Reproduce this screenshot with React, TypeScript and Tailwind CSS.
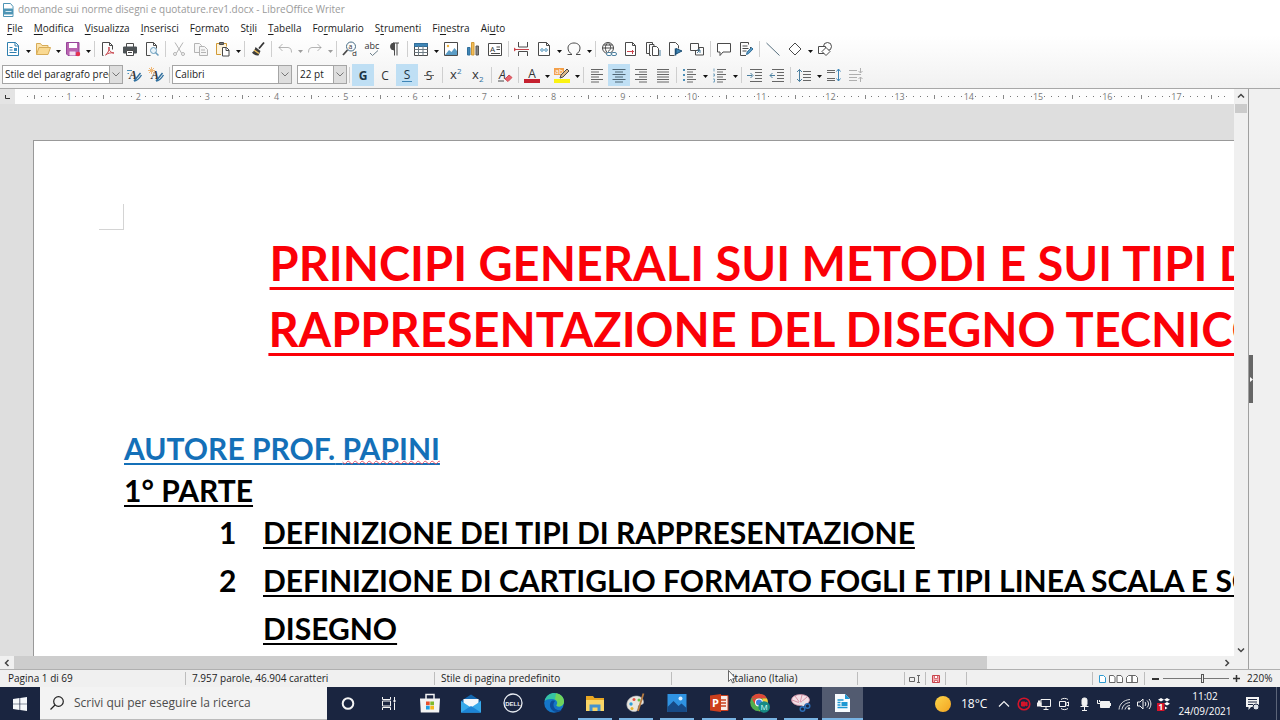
import type { ReactNode } from 'react';
import clsx from 'clsx';

const MENUS = [
  ['', 'F', 'ile'],
  ['', 'M', 'odifica'],
  ['', 'V', 'isualizza'],
  ['', 'I', 'nserisci'],
  ['F', 'o', 'rmato'],
  ['St', 'i', 'li'],
  ['', 'T', 'abella'],
  ['Fo', 'r', 'mulario'],
  ['S', 't', 'rumenti'],
  ['Fi', 'n', 'estra'],
  ['Ai', 'u', 'to'],
];

const RULER_SLOTS = Array.from({ length: 174 }, (_, i) => i + 4);

function Icon({ children, dim }: { children: ReactNode; dim?: boolean }) {
  return (
    <svg
      viewBox="0 0 16 16"
      className={clsx('h-4 w-4 shrink-0 overflow-visible', dim && 'opacity-40')}
      fill="none"
      stroke="#4a4a4a"
      strokeWidth="1"
      aria-hidden="true"
    >
      {children}
    </svg>
  );
}

interface ToolProps {
  label: string;
  children: ReactNode;
  menu?: boolean;
  active?: boolean;
  dim?: boolean;
}

function Tool({ label, children, menu, active, dim }: ToolProps) {
  return (
    <>
      <button
        type="button"
        aria-label={label}
        aria-pressed={active}
        className={clsx('flex h-[22px] w-[22px] shrink-0 items-center justify-center', active && 'bg-[#bfdff4]')}
      >
        <Icon dim={dim}>{children}</Icon>
      </button>
      {menu && (
        <button type="button" aria-label={`${label}: altre opzioni`} className="flex w-2 shrink-0 items-center justify-center">
          <svg viewBox="0 0 5 3" className={clsx('mt-1 h-[3px] w-[5px]', dim && 'opacity-40')} aria-hidden="true">
            <path d="M0 0h5L2.500 3z" fill="#111" />
          </svg>
        </button>
      )}
    </>
  );
}

function Sep() {
  return (
    <div className="flex w-[5px] shrink-0 justify-center">
      <div className="h-4 w-px bg-[#cfcfcf]" />
    </div>
  );
}

function Combo({ label, value, className }: { label: string; value: string; className: string }) {
  return (
    <div className={clsx('relative h-[19px] shrink-0', className)}>
      <select
        aria-label={label}
        className="block h-[19px] w-full appearance-none border border-[#a5a5a5] bg-white pr-3 pl-0.5 text-[10px] leading-[17px] text-[#222]"
      >
        <option>{value}</option>
      </select>
      <span className="pointer-events-none absolute inset-y-0 right-0 flex w-[14px] items-center justify-center border border-[#a5a5a5] bg-[#dedede]">
        <svg viewBox="0 0 8 5" className="h-[5px] w-2" fill="none" stroke="#777" aria-hidden="true">
          <path d="M.5.5 4 4 7.500.5" />
        </svg>
      </span>
    </div>
  );
}

function StandardBar() {
  return (
    <div className="flex h-6 items-center pl-0.5" role="toolbar" aria-label="Standard">
      <Tool label="Nuovo" menu>
        <path d="M2.500 1.500h8l3 3v10h-11z" fill="#fff" stroke="#2f7fae" />
        <path d="M10 1.500v3.500h3.500M4.500 6.500h3M4.500 9h3M4.500 11.500h7" stroke="#2f7fae" />
        <path d="M9 7h3v3H9z" fill="#3f8fc0" stroke="none" />
      </Tool>
      <Tool label="Apri" menu>
        <path d="M1.500 13.500v-11h4l1.500 2h6v2" fill="#fbe3ac" stroke="#d8ac57" />
        <path d="M1.500 13.500 4 6.500h11.500l-2.500 7z" fill="#f9d992" stroke="#d8ac57" />
      </Tool>
      <Tool label="Salva" menu>
        <path d="M1.500 1.500h12.500v13H3l-1.500-1.500z" fill="#b864b0" stroke="#97459a" />
        <path d="M4 2h8v5H4z" fill="#fff" stroke="none" />
        <path d="M4.500 10.500h6v4h-6z" fill="#f4dff2" stroke="none" />
        <circle cx="13" cy="13" r="2.200" fill="#e6304e" stroke="none" />
      </Tool>
      <Sep />
      <Tool label="Esporta in PDF">
        <path d="M3.500 14.500h-1v-13h7l3 3v4M9.500 1.500v3h3" />
        <path d="M5.500 14c3-2 4-6 3.500-8-.8 3 2 6 5 6-3-.5-6 0-8.500 2z" stroke="#c8434b" />
      </Tool>
      <Tool label="Stampa">
        <path d="M4.500 6V2.500h7V6" fill="#fff" />
        <path d="M1.500 6h13v6h-13z" fill="#4d5356" stroke="#4d5356" />
        <path d="M4.500 9.500h7v5h-7z" fill="#fff" />
        <path d="M6 11.500h4" />
      </Tool>
      <Tool label="Anteprima di stampa">
        <path d="M6.500 14.500h-4v-13h7l3 3v3M9.500 1.500v3h3" />
        <circle cx="9.500" cy="9.500" r="3" stroke="#6a9dbd" fill="#e8f3fa" />
        <path d="m11.500 11.500 3 3" stroke="#6a9dbd" strokeWidth="1.500" />
      </Tool>
      <Sep />
      <Tool label="Taglia" dim>
        <path d="M4 1.500 10.500 12M12 1.500 5.500 12" />
        <circle cx="4" cy="13" r="1.500" />
        <circle cx="12" cy="13" r="1.500" />
      </Tool>
      <Tool label="Copia" dim>
        <path d="M1.500 2.500h5l2 2v7h-7z" fill="#eee" />
        <path d="M6.500 5.500h5l3 3v6h-8zM8 9h4M8 11.500h5" fill="#eee" />
      </Tool>
      <Tool label="Incolla" menu>
        <path d="M6 13.500H1.500v-11h10v3" stroke="#d19a35" fill="#fdf3dc" />
        <path d="M4.500 1.500h4v2h-4z" fill="#777" />
        <path d="M7.500 6.500h4l2.500 2.500v6h-6.500zM11 6.500v3h3" fill="#fff" />
      </Tool>
      <Sep />
      <Tool label="Clona formattazione">
        <path d="m14 1.500-5 6" stroke="#333" strokeWidth="1.800" />
        <path d="m5.500 6 5 4-2 4.500c-3 0-5-1-6.500-3 2-1 3-3 3.500-5.500z" fill="#3d3d3d" stroke="none" />
        <path d="m4 9 5 3.500" stroke="#efc15c" strokeWidth="1.500" />
      </Tool>
      <Sep />
      <Tool label="Annulla" menu dim>
        <path d="M5.500 3 2 6.500 5.500 10M2 6.500h9c3 0 3.500 3 3.500 5" />
      </Tool>
      <Tool label="Ripristina" menu dim>
        <path d="M10.500 3 14 6.500 10.500 10M14 6.500H5c-3 0-3.500 3-3.500 5" />
      </Tool>
      <Sep />
      <Tool label="Trova e sostituisci">
        <circle cx="9" cy="5.500" r="4.500" stroke="#476d86" />
        <path d="M5.500 9 1 14" strokeWidth="1.800" />
        <text x="6.500" y="8" fontSize="7" fill="#333" stroke="none" className="font-['Open_Sans',sans-serif]">a</text>
        <text x="10" y="15" fontSize="8" fill="#333" stroke="none" className="font-['Open_Sans',sans-serif]">d</text>
      </Tool>
      <Tool label="Controllo ortografico">
        <text x="8" y="8" textAnchor="middle" fontSize="9" fill="#333" stroke="none" className="font-['Open_Sans',sans-serif]">abc</text>
        <path d="m6 12 2.500 2.500L14 9.500" stroke="#6b7f8a" />
      </Tool>
      <Tool label="Segni di formattazione">
        <path d="M8 2a3.500 3.500 0 0 0 0 7z" fill="#4a4a4a" />
        <path d="M7 2h6M8.500 2v12.500M11 2v12.500" />
      </Tool>
      <Sep />
      <Tool label="Inserisci tabella" menu>
        <path d="M1.500 2.500h13v12h-13z" fill="#fff" />
        <path d="M1.500 2.500h13v3h-13z" fill="#3f86b7" stroke="#316f9b" />
        <path d="M1.500 8.500h13M1.500 11.500h13M5.500 5v9.500M10 5v9.500" stroke="#6f7c84" />
      </Tool>
      <Tool label="Inserisci immagine">
        <path d="M1.500 1.500h13v13h-13z" fill="#fff" />
        <path d="m2 14 4-5 2.500 2 3-4L14 10v4z" fill="#5b9cc5" stroke="none" />
        <circle cx="5" cy="5" r="1.200" fill="#efb23e" stroke="none" />
      </Tool>
      <Tool label="Inserisci grafico">
        <path d="M2.500 6.500h2.500v7.500H2.500z" fill="#3f86b7" stroke="#316f9b" />
        <path d="M6.500 1.500H9v12.500H6.500z" fill="#f3bd59" stroke="#d19a35" />
        <path d="M11 5h2.500v9H11z" fill="#888" stroke="#555" />
      </Tool>
      <Tool label="Inserisci casella di testo">
        <path d="M1.500 2.500h13v12h-13z" fill="#fff" />
        <text x="3" y="11" fontSize="8" fill="#333" stroke="none" className="font-['Open_Sans',sans-serif]">A</text>
        <path d="M9.500 6h3.500M9.500 8.500h3.500M4 12.500h9" />
      </Tool>
      <Sep />
      <Tool label="Interruzione di pagina">
        <path d="M4.500 1v5h9V1M4.500 15v-4.500h9V15" />
        <path d="M1 8.500h14" stroke="#c8434b" />
        <path d="M0 6.500v4l2.500-2z" fill="#c8434b" stroke="none" />
      </Tool>
      <Tool label="Inserisci campo" menu>
        <path d="M2.500 1.500h8l3 3v10h-11zM10.500 1.500v3h3" fill="#fff" />
        <path d="m6.500 7-2 2 2 2M9.500 7l2 2-2 2M6 9h4" stroke="#2f7fae" />
      </Tool>
      <Tool label="Carattere speciale" menu>
        <path d="M1.500 13.500H6c-2.500-2-4-3.500-4-6.500C2 4 4.500 2 8 2s6 2 6 5c0 3-1.500 4.500-4 6.500h4.500" />
      </Tool>
      <Sep />
      <Tool label="Collegamento ipertestuale">
        <circle cx="7" cy="7" r="5.500" />
        <path d="M1.500 7h11M7 1.500c-3.500 3-3.500 8 0 11M7 1.500c3.500 3 3.500 7 0 9M2.500 4h9" />
        <rect x="5.500" y="11.500" width="5" height="3" rx="1.500" fill="#fff" stroke="#4b7f9f" />
        <rect x="10.500" y="11.500" width="5" height="3" rx="1.500" fill="#fff" stroke="#4b7f9f" />
      </Tool>
      <Tool label="Nota a piè di pagina">
        <path d="M2.500 1.500h7l3 3v10h-10zM9.500 1.500v3h3" fill="#fff" />
        <path d="M4 10.500h7M9.500 9v4" stroke="#c8434b" />
      </Tool>
      <Tool label="Nota di chiusura">
        <path d="M4 12.500H1.500v-11h6V3M6 14.500H4.500v-11H9V5" />
        <path d="M7.500 5.500h4l2 2v7h-6z" fill="#fff" />
        <path d="M15 9v6" stroke="#4b7f9f" />
      </Tool>
      <Tool label="Segnalibro">
        <path d="M7.500 14.500h-5v-13h6l3 3v3" />
        <path d="M8.500 14.500v-7" stroke="#1d4f74" strokeWidth="1.500" />
        <path d="M9 7.500 15 10l-6 3z" fill="#3f86b7" stroke="#1d4f74" />
      </Tool>
      <Tool label="Riferimento incrociato">
        <path d="M1.500 2.500h8v7h-8zM5 9.500h5v-3h4.500v7.500H6.500v-5" />
        <path d="m8 12 3-3m0 3V9H8" stroke="#4b7f9f" />
      </Tool>
      <Sep />
      <Tool label="Commento">
        <path d="M1.500 2.500h13v8.500H7l-3 3.500V11H1.500z" fill="#fff" />
      </Tool>
      <Tool label="Revisioni">
        <path d="M8 14.500H2.500v-13h8v2M12.500 6v3" />
        <path d="M4.500 5h5M4.500 7.500h6M4.500 10h4" />
        <path d="m8.500 13.500.7-2.500 4.300-4.500 1.500 1.500-4.300 4.500z" fill="#5b9cc5" stroke="#316f9b" />
      </Tool>
      <Sep />
      <Tool label="Linea">
        <path d="m1.500 2 13 12.500" stroke="#57707f" />
      </Tool>
      <Tool label="Forme" menu>
        <path d="M8 2 14 8 8 14 2 8z" fill="#fff" />
      </Tool>
      <Tool label="Funzioni di disegno">
        <circle cx="10.500" cy="5.500" r="4" />
        <path d="M1.500 5.500h7v7h-7z" fill="#fff" />
        <path d="m9 6.500 4 4-4 4-4-4z" fill="#fff" />
      </Tool>
    </div>
  );
}

function FormatBar() {
  return (
    <div className="flex h-[27px] items-center pl-0.5" role="toolbar" aria-label="Formattazione">
      <Combo label="Stile del paragrafo" value="Stile del paragrafo predefinito" className="w-[121px]" />
      <Tool label="Aggiorna stile">
        <text x="3" y="12" fontSize="12" fontWeight="700" fill="#333" stroke="none" className="font-['Liberation_Serif',serif] italic">A</text>
        <path d="M1 3.500h5M3 6.500H1.500" stroke="#4b8fb8" />
        <path d="m8 14 6.500-8M8 14c3 0 5-2 7.500-6" stroke="#2f6f9e" strokeWidth="1.400" />
      </Tool>
      <Tool label="Nuovo stile">
        <text x="3" y="12" fontSize="12" fontWeight="700" fill="#333" stroke="none" className="font-['Liberation_Serif',serif] italic">A</text>
        <path d="M3.500 0v7M0 3.500h7M1 1l5 5M6 1 1 6" stroke="#efb878" />
        <path d="m8 14 6.500-8M8 14c3 0 5-2 7.500-6" stroke="#2f6f9e" strokeWidth="1.400" />
      </Tool>
      <Sep />
      <Combo label="Tipo di carattere" value="Calibri" className="w-[120px]" />
      <div className="w-[5px] shrink-0" />
      <Combo label="Dimensione carattere" value="22 pt" className="w-[50px]" />
      <Sep />
      <Tool label="Grassetto" active>
        <text x="8" y="12.500" textAnchor="middle" fontSize="12" fontWeight="700" fill="#1c3445" stroke="none" className="font-['Open_Sans',sans-serif]">G</text>
      </Tool>
      <Tool label="Corsivo">
        <text x="8" y="12.500" textAnchor="middle" fontSize="12" fill="#333" stroke="none" className="font-['Open_Sans',sans-serif]">C</text>
      </Tool>
      <Tool label="Sottolineato" active>
        <text x="8" y="11.500" textAnchor="middle" fontSize="12" fill="#1c3445" stroke="none" className="font-['Open_Sans',sans-serif]">S</text>
        <path d="M3 14.500h10" stroke="#3f86b7" />
      </Tool>
      <Tool label="Barrato">
        <text x="8" y="12.500" textAnchor="middle" fontSize="12" fill="#333" stroke="none" className="font-['Open_Sans',sans-serif]">S</text>
        <path d="M3 8.500h10" stroke="#666" />
      </Tool>
      <Sep />
      <Tool label="Apice">
        <text x="2" y="12" fontSize="13" fill="#333" stroke="none" className="font-['Open_Sans',sans-serif]">x</text>
        <text x="9" y="7" fontSize="8" fill="#2f6f9e" stroke="none" className="font-['Open_Sans',sans-serif]">2</text>
      </Tool>
      <Tool label="Pedice">
        <text x="2" y="12" fontSize="13" fill="#333" stroke="none" className="font-['Open_Sans',sans-serif]">x</text>
        <text x="9" y="15" fontSize="8" fill="#2f6f9e" stroke="none" className="font-['Open_Sans',sans-serif]">2</text>
      </Tool>
      <Sep />
      <Tool label="Cancella formattazione diretta">
        <text x="2" y="12" fontSize="12" fill="#333" stroke="none" className="font-['Open_Sans',sans-serif] italic">A</text>
        <path d="M1 14h6" />
        <path d="m8 12 4-4 3 2.500-4 4z" fill="#e8616b" stroke="#d04b55" />
      </Tool>
      <Sep />
      <Tool label="Colore carattere" menu>
        <text x="8" y="11" textAnchor="middle" fontSize="12" fill="#333" stroke="none" className="font-['Open_Sans',sans-serif]">A</text>
        <path d="M0 12h16v4H0z" fill="#c5202f" stroke="none" />
      </Tool>
      <Tool label="Colore evidenziazione" menu>
        <path d="M0 1h10v7H0z" fill="#f3a04a" stroke="none" />
        <text x="1" y="7" fontSize="7" fill="#fff" stroke="none" className="font-['Open_Sans',sans-serif]">ab</text>
        <path d="m6 11 1-3 6-6 2 2-6 6z" fill="#d9b98a" stroke="#4a4a4a" />
        <path d="M0 12h16v4H0z" fill="#fbf312" stroke="none" />
      </Tool>
      <Sep />
      <Tool label="Allinea a sinistra">
        <path d="M2 2.500h12M2 5h8M2 7.500h12M2 10h8M2 12.500h12M2 15h8" stroke="#666" />
      </Tool>
      <Tool label="Centra" active>
        <path d="M1.500 2.500h13M4 5h8M1.500 7.500h13M4 10h8M1.500 12.500h13M4 15h8" stroke="#4f6675" />
      </Tool>
      <Tool label="Allinea a destra">
        <path d="M2 2.500h12M6 5h8M2 7.500h12M6 10h8M2 12.500h12M6 15h8" stroke="#666" />
      </Tool>
      <Tool label="Giustificato">
        <path d="M2 2.500h12M2 5h12M2 7.500h12M2 10h12M2 12.500h12M2 15h12" stroke="#666" />
      </Tool>
      <Sep />
      <Tool label="Elenco puntato" menu>
        <path d="M5 2.500h9M5 5h6M5 7.500h9M5 10h6M5 12.500h9M5 15h6" stroke="#666" />
        <path d="M1 2h2v2H1zM1 7h2v2H1zM1 12h2v2H1z" fill="#4b8fb8" stroke="none" />
      </Tool>
      <Tool label="Elenco numerato" menu>
        <path d="M5 2.500h9M5 5h6M5 7.500h9M5 10h6M5 12.500h9M5 15h6" stroke="#666" />
        <path d="M2 1.500v3M1 7h1.500v2H1M1 12h1.500v3H1" stroke="#7ba7c2" />
      </Tool>
      <Sep />
      <Tool label="Aumenta rientro">
        <path d="M3 2.500h12M8 5.500h7M8 8.500h7M8 11.500h7M3 14.500h12" stroke="#666" />
        <path d="M0 8.500h5M3.500 6l2.500 2.500L3.500 11" stroke="#4b7f9f" />
      </Tool>
      <Tool label="Riduci rientro">
        <path d="M3 2.500h12M8 5.500h7M8 8.500h7M8 11.500h7M3 14.500h12" stroke="#666" />
        <path d="M1 8.500h5M3.500 6 1 8.500 3.500 11" stroke="#4b7f9f" />
      </Tool>
      <Sep />
      <Tool label="Interlinea" menu>
        <path d="M7 4.500h8M7 7.500h8M7 10.500h8M7 13.500h8" stroke="#666" />
        <path d="M3.500 2.500v12M1 5l2.500-2.500L6 5M1 12l2.500 2.500L6 12" stroke="#4b7f9f" />
      </Tool>
      <Tool label="Aumenta spaziatura tra paragrafi">
        <path d="M1 3.500h8M1 5.500h8M1 11.500h8M1 13.500h8" stroke="#666" />
        <path d="M12.500 2v12M10.500 4.500 12.500 2l2 2.500M10.500 11.500l2 2.500 2-2.500" stroke="#3f86b7" />
      </Tool>
      <Tool label="Riduci spaziatura tra paragrafi" dim>
        <path d="M1 3.500h8M1 7.500h12M1 10.500h8M1 13.500h8" />
        <path d="M12.500 1v5M10.500 4l2 2 2-2M12.500 15v-5M10.500 12l2-2 2 2" />
      </Tool>
    </div>
  );
}

function Ruler() {
  return (
    <div className="flex h-[15px] shrink-0 bg-[#e4e4e4]">
      <div className="flex w-[15px] items-center justify-center">
        <svg viewBox="0 0 5 4" className="h-1 w-[5px]" fill="none" stroke="#333" aria-hidden="true">
          <path d="M.5 0v3.500H5" />
        </svg>
      </div>
      <div className="flex min-w-0 flex-1 items-center bg-[#fdfdfd] pr-1.5 pl-[9px] text-[9px] text-[#7a7a7a]">
        {RULER_SLOTS.map((n) => (
          <div key={n} className="flex min-w-0 flex-1 justify-center">
            {n % 10 === 0 ? (
              <span>{n / 10}</span>
            ) : (
              <span className={n % 5 === 0 ? 'h-1 w-px bg-[#888]' : 'h-px w-px bg-[#777]'} />
            )}
          </div>
        ))}
      </div>
    </div>
  );
}

function Document() {
  return (
    <div className="min-h-0 flex-1 overflow-hidden bg-[#dedede] pt-9 pl-[33px]">
      <article className="h-full w-[1471px] border-t border-l border-[#999] bg-white px-[90px] pb-px font-['Lato',sans-serif] text-[30px] leading-[42px] font-bold text-black [text-decoration-skip-ink:none]">
        <div className="-ml-[25px] flex h-[89px] items-end">
          <div className="h-[26px] w-[25px] border-r border-b border-[#d4d4d4]" />
        </div>
        <h1 className="text-center text-[47px] leading-[66px] text-[#fb0007] underline decoration-[3px] underline-offset-[6px]">
          PRINCIPI GENERALI SUI METODI E SUI TIPI DI
          <br />
          RAPPRESENTAZIONE DEL DISEGNO TECNICO
        </h1>
        <p className="mt-[65px] text-[#1470b8]">
          <span className="underline decoration-2 underline-offset-3">
            AUTORE PROF.{' '}
            <span className="underline decoration-[#e8556a] decoration-wavy decoration-1 underline-offset-0">PAPINI</span>
          </span>
        </p>
        <p className="underline decoration-2 underline-offset-3">1° PARTE</p>
        <ol className="pl-[95px]">
          <li className="mb-[3px] flex">
            <span className="w-11">1</span>
            <span className="underline decoration-2 underline-offset-3">DEFINIZIONE DEI TIPI DI RAPPRESENTAZIONE</span>
          </li>
          <li className="flex leading-[48px] whitespace-nowrap">
            <span className="w-11">2</span>
            <span className="underline decoration-2 underline-offset-3">
              DEFINIZIONE DI CARTIGLIO FORMATO FOGLI E TIPI LINEA SCALA E SCALE DI
              <br />
              DISEGNO
            </span>
          </li>
        </ol>
      </article>
    </div>
  );
}

function ScrollButton({ label, d }: { label: string; d: string }) {
  return (
    <button type="button" aria-label={label} className="flex h-[13px] w-[14px] shrink-0 items-center justify-center">
      <svg viewBox="0 0 8 8" className="h-2 w-2" fill="none" stroke="#444" strokeWidth="1.500" aria-hidden="true">
        <path d={d} />
      </svg>
    </button>
  );
}

function StatusBar() {
  return (
    <footer className="flex h-[18px] shrink-0 items-center divide-x divide-[#bdbdbd] border-t border-[#b0b0b0] bg-[#f0f0f0] text-[10px] text-[#222] [&>*]:h-[13px] [&>*]:leading-[13px]">
      <span className="w-[186px] pl-2">Pagina 1 di 69</span>
      <span className="w-[249px] pl-1.5">7.957 parole, 46.904 caratteri</span>
      <span className="w-[237px] pl-1.5">Stile di pagina predefinito</span>
      <span className="relative w-[186px] text-center">
        Italiano (Italia)
        <svg viewBox="0 0 9 14" className="absolute -top-0.5 left-14 h-3.5 w-[9px]" aria-hidden="true">
          <path d="M.5.5v11l2.500-2.300L4.600 13l1.700-.7L4.700 8.700H8z" fill="#fff" stroke="#444" strokeWidth=".8" />
        </svg>
      </span>
      <span className="w-[47px]" />
      <button type="button" aria-label="Modo di inserimento" className="flex w-[21px] items-center justify-center">
        <svg viewBox="0 0 12 8" className="h-2 w-3" fill="none" stroke="#666" aria-hidden="true">
          <path d="M.5 2.500h5v4h-5zM8 .5h3M9.500.5v7M8 7.500h3" />
        </svg>
      </button>
      <button type="button" aria-label="Documento modificato" className="flex w-5 items-center justify-center">
        <svg viewBox="0 0 8 8" className="h-2 w-2" aria-hidden="true">
          <path d="M.5.5h7v7h-7z" fill="#f3a9af" stroke="#c8434b" />
          <path d="M2.500 1v2.500h3V1M2.500 7V5.500h3V7" fill="#fff" stroke="#c8434b" strokeWidth=".7" />
        </svg>
      </button>
      <span className="w-[21px]" />
      <span className="flex-1" />
      <span className="flex w-[52px] items-center justify-center gap-[3px]">
        <button type="button" aria-label="Pagina singola">
          <svg viewBox="0 0 7 8" className="h-2 w-[7px]" fill="#fff" stroke="#2f9ad0" aria-hidden="true">
            <path d="M.5.5h4l2 2v5h-6z" />
          </svg>
        </button>
        <button type="button" aria-label="Pagine multiple">
          <svg viewBox="0 0 14 8" className="h-2 w-3.5" fill="#fff" stroke="#666" aria-hidden="true">
            <path d="M.5.5h4l1.500 2v5H.5zM8 .5h4l1.500 2v5H8z" />
          </svg>
        </button>
        <button type="button" aria-label="Vista libro">
          <svg viewBox="0 0 12 8" className="h-2 w-3" fill="#fff" stroke="#666" aria-hidden="true">
            <path d="M.5 2.500 2.500.500H6v7H.5zM6 .5h3.500l2 2v5H6z" />
          </svg>
        </button>
      </span>
      <span className="flex w-[95px] items-center justify-end gap-1 border-r-0">
        <button type="button" aria-label="Riduci" className="h-[2px] w-[7px] bg-[#333]" />
        <input
          type="range"
          aria-label="Zoom"
          defaultValue={60}
          className="h-[9px] w-[66px] appearance-none bg-[linear-gradient(#777,#777)] bg-[length:100%_1px] bg-center bg-no-repeat [&::-webkit-slider-thumb]:h-[9px] [&::-webkit-slider-thumb]:w-[3px] [&::-webkit-slider-thumb]:appearance-none [&::-webkit-slider-thumb]:border [&::-webkit-slider-thumb]:border-[#555] [&::-webkit-slider-thumb]:bg-[#f0f0f0]"
        />
        <button type="button" aria-label="Aumenta">
          <svg viewBox="0 0 7 7" className="h-[7px] w-[7px]" stroke="#333" strokeWidth="1.500" aria-hidden="true">
            <path d="M3.500 0v7M0 3.500h7" />
          </svg>
        </button>
      </span>
      <span className="w-10 pl-[7px]">220%</span>
    </footer>
  );
}

function TaskApp({ label, children, open, active }: { label: string; children: ReactNode; open?: boolean; active?: boolean }) {
  return (
    <button
      type="button"
      aria-label={label}
      className={clsx('flex flex-col items-center justify-between', active && 'bg-[#525b70]')}
    >
      <svg viewBox="0 0 20 20" className="mt-1.5 h-5 w-5" fill="none" aria-hidden="true">
        {children}
      </svg>
      <span className={clsx('h-0.5', active ? 'w-full' : 'w-[34px]', open && 'bg-[#79b4e3]')} />
    </button>
  );
}

function TrayIcon({ label, children }: { label: string; children: ReactNode }) {
  return (
    <button type="button" aria-label={label} className="flex w-5 items-center justify-center">
      <svg viewBox="0 0 14 14" className="h-3.5 w-3.5 overflow-visible" fill="none" stroke="#f2f2f2" aria-hidden="true">
        {children}
      </svg>
    </button>
  );
}

function Taskbar() {
  return (
    <nav className="flex h-[33px] shrink-0 bg-[#1a2540] text-white" aria-label="Barra delle applicazioni">
      <button type="button" aria-label="Start" className="flex w-10 items-center justify-center">
        <svg viewBox="0 0 14 14" className="h-3.5 w-3.5" fill="#f4f7fa" aria-hidden="true">
          <path d="M0 2 6.500 1v5.700H0zM7.200.9 14 0v6.700H7.200zM0 7.300h6.500V13L0 12zM7.200 7.300H14V14l-6.800-.9z" />
        </svg>
      </button>
      <label className="flex w-[287px] items-center gap-2.5 border-b border-[#bbb] bg-[#f3f3f3] pl-2.5">
        <svg viewBox="0 0 14 14" className="h-3.5 w-3.5 shrink-0" fill="none" stroke="#222" strokeWidth="1.200" aria-hidden="true">
          <circle cx="8.500" cy="5.500" r="4.800" />
          <path d="M5 9 .5 13.500" />
        </svg>
        <input
          type="text"
          aria-label="Ricerca"
          placeholder="Scrivi qui per eseguire la ricerca"
          className="min-w-0 flex-1 bg-transparent text-[12px] text-[#444] outline-none placeholder:text-[#4c4c4c]"
        />
      </label>
      <div className="grid w-[536px] grid-cols-[repeat(13,minmax(0,1fr))]">
        <TaskApp label="Cortana">
          <circle cx="10" cy="10.500" r="5.300" stroke="#f4f4f4" strokeWidth="2" />
        </TaskApp>
        <TaskApp label="Visualizzazione attività">
          <path d="M3.500 4v2.500h8V4M3.500 17v-2.500h8V17M3.500 8h8v5h-8zM15.500 4v3M15.500 9.500V17" stroke="#f4f4f4" />
          <path d="M14.500 7h2v2h-2z" fill="#f4f4f4" />
        </TaskApp>
        <TaskApp label="Microsoft Store">
          <path d="M6 6V1.500h8V6" stroke="#f4f4f4" strokeWidth="1.500" />
          <path d="M0 5.500h20l-.8 14H.8z" fill="#f4f4f4" />
          <path d="M6 8.500h3.700v3.700H6z" fill="#e8502c" />
          <path d="M10.300 8.500H14v3.700h-3.700z" fill="#7fba2a" />
          <path d="M6 12.800h3.700v3.700H6z" fill="#1d9fe4" />
          <path d="M10.300 12.800H14v3.700h-3.700z" fill="#f5b81b" />
        </TaskApp>
        <TaskApp label="Posta">
          <path d="m0 8 10-6.500L20 8v11.500H0z" fill="#1467ae" />
          <path d="M2.500 6h15v8h-15z" fill="#f4f8fb" />
          <path d="M0 8v11.500h20V8l-10 6.500z" fill="#37a9ea" />
          <path d="M0 19.500 10 13l10 6.500z" fill="#1c84d6" />
        </TaskApp>
        <TaskApp label="Dell">
          <circle cx="10" cy="10" r="9" stroke="#e7ebf1" strokeWidth="1.300" />
          <text x="10" y="12.500" textAnchor="middle" fontSize="6" fontWeight="700" fill="#e7ebf1" className="font-['Liberation_Sans',sans-serif]">DELL</text>
        </TaskApp>
        <TaskApp label="Microsoft Edge">
          <circle cx="10" cy="10" r="9.800" fill="#1576c8" />
          <path d="M.6 8C2 2.500 6 0 10.300 0 16 0 20 4 20 8.500c0 3-2.500 5-5.500 5-2 0-2.500-1-1.500-2.200C14 9 12 6.500 8.500 6 5 5.700 2 6.500.6 8z" fill="#36c3a4" />
          <path d="M12 .2C17 1 20 4.500 20 8.500c0 3-2.500 5-5.500 5-2 0-2.500-1-1.500-2.200 1-1.500 0-4-2-5z" fill="#71d35b" />
          <path d="M7.500 8c-3 3-1.500 8.500 2.500 10.500 3 1 6.500.5 8-2-3 1.500-6 .5-7.500-1.500S9 10 11 8c-1-.6-2.500-.6-3.500 0z" fill="#0d4c9a" />
        </TaskApp>
        <TaskApp label="Esplora file" open>
          <path d="M1 3h7l1.500 2H19v4H1z" fill="#e8a723" />
          <path d="M1 7h18v11H1z" fill="#fbd667" />
          <path d="M4.500 18v-6.500h11V18h-3v-3.500h-5V18z" fill="#4594cf" />
        </TaskApp>
        <TaskApp label="Paint 3D" open>
          <path d="M1 13C0 8 4 3.500 10 3c4 0 7 2 7.500 5.500.5 3-2 3-4 3.500s-1 3-2 5C10 20 2 18.500 1 13z" fill="#e9e6df" stroke="#aeb2b6" strokeWidth=".6" />
          <circle cx="5" cy="11" r="1.700" fill="#2f9fd8" />
          <circle cx="8" cy="6.500" r="1.500" fill="#e75445" />
          <circle cx="13" cy="7" r="1.500" fill="#6abe4b" />
          <circle cx="6" cy="15.500" r="1.500" fill="#e9b531" />
          <path d="M17.500.5 12 18" stroke="#b77c42" strokeWidth="1.800" />
        </TaskApp>
        <TaskApp label="Foto" open>
          <path d="M.5 1h19v18H.5z" fill="#2f93e2" />
          <path d="m.5 14 6-6 5 5 3-2.500 5 4.500v4H.5z" fill="#174a86" />
          <circle cx="13.500" cy="5.500" r="2" fill="#dcefff" />
        </TaskApp>
        <TaskApp label="PowerPoint" open>
          <path d="M10 2.500h9v15h-9z" fill="#f7ebe7" stroke="#c9401f" />
          <path d="M12 7h5M12 10h5M12 13h5" stroke="#c9401f" strokeWidth="1.300" />
          <path d="M1 2.500 12 1v18L1 17.500z" fill="#cc3f1c" />
          <text x="3" y="14" fontSize="11" fontWeight="700" fill="#fff" className="font-['Open_Sans',sans-serif]">P</text>
        </TaskApp>
        <TaskApp label="Google Chrome" open>
          <circle cx="9" cy="9.500" r="8.800" fill="#4fae50" />
          <path d="M1.300 5A9 9 0 0 1 17 5.500H9z" fill="#df4838" />
          <path d="M17 5.500A9 9 0 0 1 9 18.300l4-6.800L12.500 5.500z" fill="#f8cc39" />
          <path d="M1.300 5 5.500 12 9 5.500H2z" fill="#df4838" />
          <circle cx="9" cy="9.500" r="4" fill="#fff" />
          <circle cx="9" cy="9.500" r="3" fill="#3c7fe0" />
          <circle cx="14.200" cy="14" r="5.800" fill="#178a84" />
          <text x="14.200" y="17" textAnchor="middle" fontSize="8" fill="#dff" className="font-['Open_Sans',sans-serif]">M</text>
        </TaskApp>
        <TaskApp label="Strumento di cattura" open>
          <ellipse cx="9.500" cy="7" rx="9" ry="5.500" fill="#f3dfe6" stroke="#cc8fa5" strokeWidth=".8" />
          <path d="m9 10 2-8M9 10 4 3M9 10 1 7M9 10l7-6" stroke="#d5899f" strokeWidth=".9" />
          <path d="m8 9 5 4M12 8l.500 5" stroke="#dfe4ea" strokeWidth="1.500" />
          <circle cx="11.500" cy="16" r="2.300" stroke="#2d6db5" strokeWidth="1.500" />
          <circle cx="16.500" cy="13" r="2.300" stroke="#2d6db5" strokeWidth="1.500" />
        </TaskApp>
        <TaskApp label="LibreOffice Writer" open active>
          <path d="M3 1h10l5 5v13H3z" fill="#f8fcfe" />
          <path d="M13 1v5h5z" fill="#1c98d3" />
          <path d="M5.500 7h6M5.500 9.500h3M5.500 12h3M5.500 14.500h10" stroke="#1c98d3" strokeWidth="1.300" />
          <path d="M9.500 9h6v4h-6z" fill="#1c98d3" />
        </TaskApp>
      </div>
      <div className="flex-1" />
      <button type="button" className="flex w-[59px] items-center gap-2.5 text-[12px]">
        <span className="h-4 w-4 rounded-full bg-linear-to-br from-[#fbd54a] to-[#f3a41f]" />
        18°C
      </button>
      <div className="flex w-[180px]">
        <TrayIcon label="Mostra icone nascoste">
          <path d="m2 9.500 5-5 5 5" strokeWidth="1.200" />
        </TrayIcon>
        <TrayIcon label="Registrazione">
          <circle cx="7" cy="7" r="5.800" stroke="#d5142a" strokeWidth="1.600" />
          <path d="M4.500 5h3.500v1.200L10 5v4L8 7.800V9H4.500z" fill="#d5142a" stroke="#d5142a" />
        </TrayIcon>
        <TrayIcon label="Rete">
          <path d="M4 2.500h9.500v7H4zM6.500 12.500h5M9 9.500v3" />
          <path d="M0 5.500h4.500v4H0zM1 5.500v-2h2.500v2" fill="#f2f2f2" stroke="none" />
        </TrayIcon>
        <TrayIcon label="Fotocamera">
          <path d="M2.500 4.500h6v5h-6zM8.500 6.500l3-1.500v4l-3-1.500M4 2.500C6 1 9 1 11 2.500M4 11.500c2 1.500 5 1.500 7 0" />
        </TrayIcon>
        <TrayIcon label="Microfono">
          <rect x="5" y="1" width="5" height="8" rx="2" fill="#f2f2f2" />
          <path d="M3.500 9.500h8M7.500 9v4M5 13.500h5" />
        </TrayIcon>
        <TrayIcon label="Batteria">
          <path d="M3.500 4.500h9v6h-9z" fill="#f2f2f2" />
          <path d="M13.500 6v3M.5 3v3.500h4M2.500 3v2" />
        </TrayIcon>
        <TrayIcon label="Wi-Fi">
          <path d="M2 12.500C2.500 7 6.500 3 13 2.500M5 12.500C5.500 9 8 6 13 5.500M8 12.500c.5-2 2-4 5-4" strokeWidth=".9" />
          <circle cx="12" cy="11.500" r="1.200" fill="#f2f2f2" stroke="none" />
        </TrayIcon>
        <TrayIcon label="Volume">
          <path d="M.5 5h2.500l3-3v10L3 9H.5zM8 5c1 1 1 3 0 4M10 3.500c2 2 2 5 0 7M12 2c2.500 3 2.500 7 0 10" />
        </TrayIcon>
        <TrayIcon label="Dropbox">
          <path d="m4 1 3 1.800L4 4.600 1 2.800zM10 1l3 1.800-3 1.800-3-1.800zM10 5l3 1.800-3 1.800-3-1.800zM8 9.500l2.500 1.500L8 12.500z" fill="#fff" stroke="none" />
          <path d="M0 6h7.500v8H0z" fill="#d5142a" stroke="none" />
          <text x="3.700" y="13" textAnchor="middle" fontSize="8" fontWeight="700" fill="#fff" stroke="none" className="font-['Open_Sans',sans-serif]">1</text>
        </TrayIcon>
      </div>
      <button type="button" className="w-[62px] text-center text-[10px] leading-[15px]">
        11:02
        <br />
        24/09/2021
      </button>
      <button type="button" aria-label="Centro notifiche" className="flex w-8 items-center justify-center">
        <svg viewBox="0 0 15 15" className="h-[15px] w-[15px]" fill="none" aria-hidden="true">
          <path d="M1 1h13v10H6l-2.500 3v-3H1z" fill="#f4f4f4" />
          <path d="M3 3.500h9M3 6h9M3 8.500h5" stroke="#1a2540" />
          <circle cx="11" cy="11" r="3" fill="#dfe3ea" stroke="#1a2540" />
        </svg>
      </button>
      <button type="button" aria-label="Mostra desktop" className="ml-2 w-1 border-l border-[#5b6478]" />
    </nav>
  );
}

export default function App() {
  return (
    <div className="flex h-screen flex-col overflow-hidden bg-[#f0f0f0] font-['Open_Sans',sans-serif]">
      <header className="shrink-0 border-b border-[#a8a8a8] bg-linear-to-b from-white from-40% to-[#f1f1f1]">
        <div className="flex h-[19px] items-center gap-1 pl-0.5 text-[10px] text-[#9a9a9a]">
          <svg viewBox="0 0 12 14" className="h-3.5 w-3" fill="none" stroke="#4f95b5" aria-hidden="true">
            <path d="M1.500.5h7l2.500 3v10H1.500z" fill="#fff" />
            <path d="M2 6h8.500v5H2z" fill="#4f95b5" />
            <path d="M3.500 8.500h6" stroke="#d7ecf6" />
          </svg>
          <h1>domande sui norme disegni e quotature.rev1.docx - LibreOffice Writer</h1>
        </div>
        <div className="flex h-[18px] items-center gap-[11px] pl-[7px] text-[10px] text-[#1c1c1c]" role="menubar">
          {MENUS.map(([before, key, after]) => (
            <button key={before + key + after} type="button" role="menuitem">
              {before}
              <span className="underline underline-offset-2">{key}</span>
              {after}
            </button>
          ))}
        </div>
        <StandardBar />
        <FormatBar />
      </header>

      <main className="flex min-h-0 flex-1">
        <div className="flex min-w-0 flex-1 flex-col border-r border-[#a0a0a0]">
          <div className="flex min-h-0 flex-1">
            <div className="flex min-w-0 flex-1 flex-col">
              <Ruler />
              <Document />
            </div>
            <div className="flex w-[14px] flex-col items-center">
              <ScrollButton label="Scorri in alto" d="M1 5.500 4 2.500l3 3" />
              <div className="mt-0.5 h-[9px] w-3 bg-[#cbcbcb]" />
              <div className="flex-1" />
              <ScrollButton label="Scorri in basso" d="M1 2.500 4 5.500l3-3" />
            </div>
          </div>
          <div className="flex h-[13px] shrink-0">
            <ScrollButton label="Scorri a sinistra" d="M5.500 1 2.500 4l3 3" />
            <div className="w-[78%] bg-[#cdcdcd]" />
            <div className="flex-1" />
            <ScrollButton label="Scorri a destra" d="m2.500 1 3 3-3 3" />
            <div className="w-[14px]" />
          </div>
        </div>
        <div className="flex w-[31px] items-center">
          <button type="button" aria-label="Mostra barra laterale" className="flex h-12 w-1 items-center justify-center bg-[#666]">
            <svg viewBox="0 0 3 5" className="h-[5px] w-[3px]" aria-hidden="true">
              <path d="M0 0v5l3-2.500z" fill="#fff" />
            </svg>
          </button>
        </div>
      </main>

      <StatusBar />
      <Taskbar />
    </div>
  );
}
